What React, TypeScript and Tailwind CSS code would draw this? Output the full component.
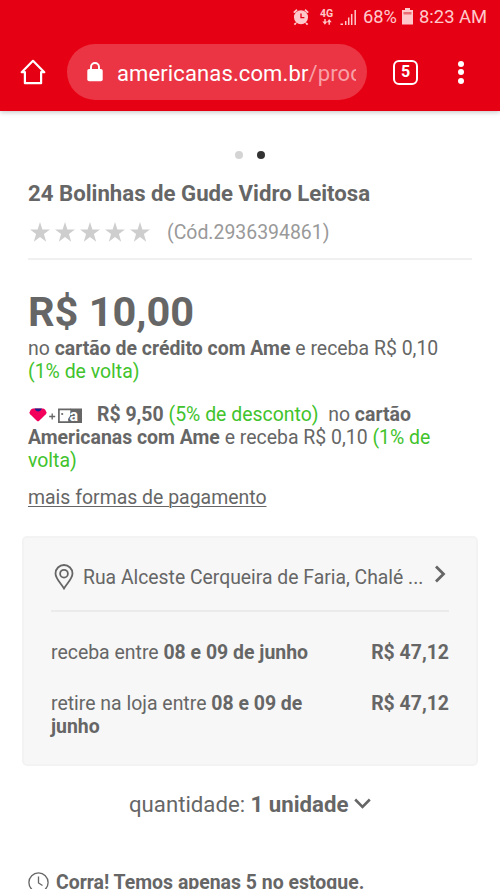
import React from "react";

function StatusBar() {
  return (
    <div className="flex h-[34px] items-center pl-[292px] text-[#ffc9cb]">
      <svg width="18" height="18" viewBox="0 0 18 18" className="shrink-0">
        <circle cx="9" cy="9.3" r="7" fill="currentColor" />
        <path d="M1.8 4.6 5 1.8M16.2 4.6 13 1.8M4 15l-1.6 1.7M14 15l1.6 1.7" stroke="currentColor" strokeWidth="1.8" />
        <path d="M9 5.4v4.2h3.4" fill="none" stroke="#e60014" strokeWidth="1.3" />
      </svg>
      <div className="ml-[9px] flex w-[15px] flex-col items-center">
        <span className="text-[10.5px] leading-[10px] font-bold">4G</span>
        <svg width="10" height="6" viewBox="0 0 10 6">
          <path d="M2.3 0v2.500H.4l2.500 3.200 2.500-3.200H3.700V0zM6.500 5.700V3.200H4.900L7.200 0l2.500 3.200H7.900v2.500z" fill="currentColor" />
        </svg>
      </div>
      <svg width="17" height="17" viewBox="0 0 17 17" className="ml-[6px] shrink-0">
        <path d="M5.700 16v-4M8.700 16V8.500M11.700 16V5M15.200 16V1" stroke="currentColor" strokeWidth="1.500" />
        <path d="M.5 16v-1.500H3V16z" fill="currentColor" />
      </svg>
      <span className="ml-[6px] w-[34px] text-[18.3px] whitespace-nowrap">68%</span>
      <svg width="11" height="18" viewBox="0 0 11 18" className="ml-[5px] shrink-0">
        <path d="M3 0h5v2h3v14.500H0V2h3z" fill="currentColor" />
        <path d="M1.500 4h8v2.500h-8z" fill="#ea6c72" />
      </svg>
      <span className="ml-[6px] text-[18.4px] whitespace-nowrap">8:23 AM</span>
    </div>
  );
}

function Toolbar() {
  return (
    <div className="flex h-[77px] items-center pb-[1px]">
      <svg width="26" height="26" viewBox="0 0 26 26" className="ml-5 shrink-0" fill="none" stroke="white" strokeWidth="2.2" strokeLinejoin="round">
        <path d="M1.7 13.2 13 1.8l11.300 11.400h-3.200v11H4.900v-11z" />
      </svg>
      <div className="ml-[21px] flex h-14 w-[300px] shrink-0 items-center rounded-full bg-[#eb3544] pr-[10px] pl-5">
        <svg width="16" height="20" viewBox="0 0 16 20" className="shrink-0">
          <path d="M4 8V5a4 4 0 0 1 8 0v3" fill="none" stroke="white" strokeWidth="1.9" />
          <rect x="0.3" y="7" width="15.4" height="12.3" rx="1.8" fill="white" />
        </svg>
        <div className="ml-[14px] w-[239px] overflow-hidden pt-[3px] text-[22px] leading-7 tracking-[0.12px] whitespace-nowrap text-white">
          americanas.com.br<span className="text-[#f8a0a7]">/proc</span>
        </div>
      </div>
      <div className="ml-[26px] flex size-[25px] shrink-0 items-center justify-center rounded-[6px] border-[2.5px] border-white text-[16px] leading-none font-bold text-white">5</div>
      <div className="ml-[40px] flex flex-col gap-[2.5px]">
        <i className="size-[6px] rounded-full bg-white" />
        <i className="size-[6px] rounded-full bg-white" />
        <i className="size-[6px] rounded-full bg-white" />
      </div>
    </div>
  );
}

function Star() {
  return (
    <svg width="20" height="20" viewBox="0 0 20 20">
      <path d="m10 0 2.4 7.4H20l-6.1 4.6 2.3 7.7-6.2-4.6-6.2 4.6L6.1 12 0 7.4h7.6z" fill="#cecece" />
    </svg>
  );
}

function PaymentIcons() {
  return (
    <span className="mr-[15px] inline-flex h-[18px] w-[54px] items-center align-[-3px]">
      <svg width="54" height="16" viewBox="0 0 54 16">
        <path d="M5 0.500h10q1.500 0 2.400 1.500l1 2.200q.4 1-.6 2L11.200 12.700q-1.200 1-2.400 0L2.200 6.200q-1-1-.6-2l1-2.200Q3.500.5 5 .5z" fill="#f2005a" />
        <path d="M6.500 0.500h7.500l-1.600 2.200-2.200.8-2.200-.8z" fill="#20208a" />
        <path d="M21.200 8.500h6M24.200 5.500v6" stroke="#666" strokeWidth="1.300" />
        <path d="M43 1.400H30.900v12.700H42" fill="none" stroke="#666" strokeWidth="1.700" />
        <path d="M42.500 .6H54v14.300H40.500l-.5-4 2-3z" fill="#666" />
        <circle cx="34.200" cy="6" r="1.100" fill="#666" />
        <text x="41.500" y="13" fill="white" fontFamily="Roboto" fontSize="16" fontWeight="700">a</text>
      </svg>
    </span>
  );
}

export default function App() {
  return (
    <div className="h-[889px] w-[500px] overflow-hidden bg-white font-['Roboto',sans-serif] text-[#666]">
      <header className="h-[111px] bg-[#e60014] shadow-[0_1px_5px_rgba(0,0,0,0.25)]">
        <StatusBar />
        <Toolbar />
      </header>

      <main className="text-[19.45px] leading-[23px]">
        <div className="flex justify-center gap-[14px] pt-[40px]">
          <i className="size-2 rounded-full bg-[#d4d4d4]" />
          <i className="size-2 rounded-full bg-[#333]" />
        </div>

        <div className="mx-7 h-[101px] border-b-2 border-[#f0f0f0] pt-[19px]">
          <h1 className="text-[22.2px] leading-[30px] font-bold whitespace-nowrap">24 Bolinhas de Gude Vidro Leitosa</h1>
          <div className="mt-[9px] flex h-[30px] items-center gap-[5px] pl-[2px]">
            <Star /><Star /><Star /><Star /><Star />
            <span className="ml-[12px] whitespace-nowrap text-[#999]">(Cód.2936394861)</span>
          </div>
        </div>

        <section className="ml-7 w-[440px] whitespace-nowrap">
          <div className="h-[77px] pt-[27px] text-[41.5px] leading-[50px] font-bold">R$ 10,00</div>
          <p>no <b>cartão de crédito com Ame</b> e receba R$ 0,10<br /><span className="text-[#41c32c]">(1% de volta)</span></p>
          <p className="mt-[20px]">
            <PaymentIcons /><b>R$ 9,50</b> <span className="text-[#41c32c]">(5% de desconto)</span>&nbsp; no <b>cartão</b><br />
            <b>Americanas com Ame</b> e receba R$ 0,10 <span className="text-[#41c32c]">(1% de<br />volta)</span>
          </p>
          <a className="mt-[14px] block underline decoration-1 underline-offset-2">mais formas de pagamento</a>
        </section>

        <section className="mt-[27px] ml-[22px] h-[230px] w-[456px] rounded-[5px] border-2 border-[#f3f3f3] bg-[#f7f7f7] px-[27px]">
          <div className="flex h-[74px] items-center border-b-2 border-[#ebebeb] pt-[6px]">
            <svg width="20" height="26" viewBox="0 0 20 26" className="ml-[3px] shrink-0" fill="none" stroke="#666" strokeWidth="1.8">
              <path d="M10 24.500C7 19.500 1.500 14.500 1.500 9.500a8.500 8.500 0 0 1 17 0c0 5-5.500 10-8.500 15z" />
              <circle cx="10" cy="9.700" r="3.900" />
            </svg>
            <span className="ml-[9px] text-[19.35px] whitespace-nowrap">Rua Alceste Cerqueira de Faria, Chalé ...</span>
            <svg width="12" height="18" viewBox="0 0 12 18" className="mr-[3px] mb-[7px] ml-auto shrink-0" fill="none" stroke="#666" strokeWidth="2.800">
              <path d="m2 1.500 7.500 7.500L2 16.500" />
            </svg>
          </div>
          <div className="mt-[29px] flex justify-between whitespace-nowrap">
            <span>receba entre <b>08 e 09 de junho</b></span>
            <b>R$ 47,12</b>
          </div>
          <div className="mt-[28px] flex justify-between whitespace-nowrap">
            <span>retire na loja entre <b>08 e 09 de<br />junho</b></span>
            <b>R$ 47,12</b>
          </div>
        </section>

        <div className="mt-[23px] ml-[129px] flex h-[30px] items-center text-[22.2px] leading-[30px] whitespace-nowrap">
          <span>quantidade: <b>1 unidade</b></span>
          <svg width="17" height="11" viewBox="0 0 17 11" className="mb-[2px] ml-[6px] shrink-0" fill="none" stroke="#666" strokeWidth="2.600">
            <path d="m1.200 1.500 7.300 7.300 7.300-7.300" />
          </svg>
        </div>

        <div className="mt-[52px] ml-7 flex items-center whitespace-nowrap">
          <svg width="21" height="21" viewBox="0 0 21 21" className="shrink-0" fill="none" stroke="#666" strokeWidth="1.300">
            <circle cx="10.500" cy="10.500" r="9.600" />
            <path d="M10.500 4.500v6.500l4 2.500" />
          </svg>
          <b className="ml-[7px]">Corra! Temos apenas 5 no estoque.</b>
        </div>
      </main>
    </div>
  );
}
